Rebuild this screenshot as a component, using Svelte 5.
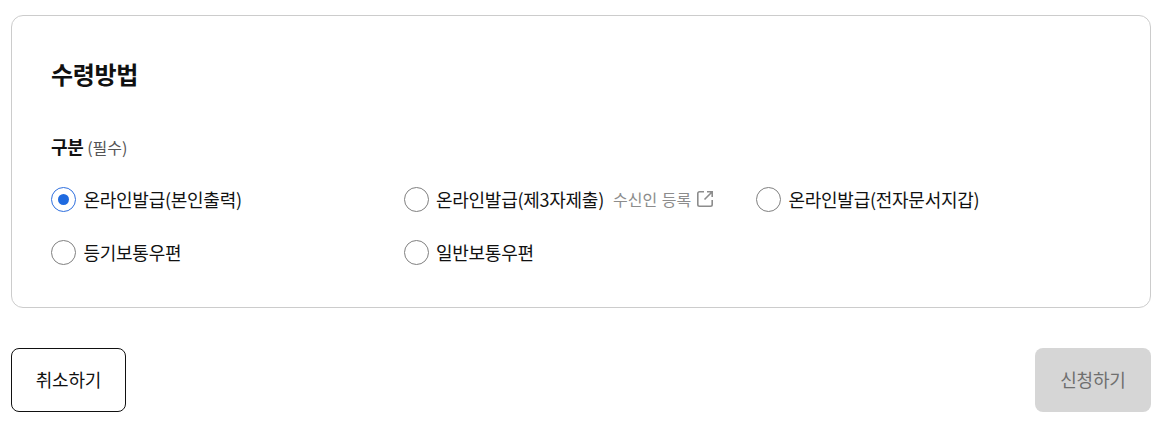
<script lang="ts">
    const options = [
        { label: "온라인발급(본인출력)", checked: true },
        { label: "온라인발급(제3자제출)", link: "수신인 등록" },
        { label: "온라인발급(전자문서지갑)" },
        { label: "등기보통우편" },
        { label: "일반보통우편" },
    ];
</script>

<main class="page">
    <section class="card">
        <h2 class="title">수령방법</h2>
        <div class="field-label"><strong>구분</strong> <span>(필수)</span></div>
        <div class="options">
            {#each options as opt}
                <div class="option">
                    <span class="radio" class:checked={opt.checked}></span>
                    <span class="label">{opt.label}</span>
                    {#if opt.link}
                        <span class="link">{opt.link}</span>
                        <svg class="ext" width="18" height="18" viewBox="0 0 18 18" fill="none" stroke="#8c8c8c" stroke-width="1.6">
                            <path d="M8 1.800H3.500A1.700 1.700 0 0 0 1.800 3.500v11a1.700 1.700 0 0 0 1.700 1.700h11a1.700 1.700 0 0 0 1.700-1.700V10" />
                            <path d="M11 1.800h5.200V7M16.200 1.800L8.500 9.500" />
                        </svg>
                    {/if}
                </div>
            {/each}
        </div>
    </section>
    <div class="actions">
        <button class="btn cancel">취소하기</button>
        <button class="btn submit" disabled>신청하기</button>
    </div>
</main>

<style>
    :global(body) {
        margin: 0;
        background: #fff;
    }

    .page {
        padding: 15px 18px 0 11px;
        font-family: "Noto Sans CJK KR", "Noto Sans", sans-serif;
        letter-spacing: -0.02em;
        color: #111;
    }

    .card {
        box-sizing: border-box;
        height: 293px;
        border: 1px solid #ccc;
        border-radius: 12px;
        padding: 40px 39px 0;
    }

    .title {
        margin: 0;
        font-size: 24px;
        line-height: 36px;
        font-weight: 700;
    }

    .field-label {
        margin-top: 42px;
        font-size: 18px;
        line-height: 24px;
    }

    .field-label strong {
        font-weight: 700;
    }

    .field-label span {
        font-size: 16px;
        letter-spacing: 0;
        color: #555;
    }

    .options {
        margin-top: 24px;
        display: grid;
        grid-template-columns: repeat(3, 352.5px);
        row-gap: 21px;
    }

    .option {
        display: flex;
        align-items: center;
        height: 32px;
        font-size: 18px;
        letter-spacing: -0.015em;
    }

    .radio {
        box-sizing: border-box;
        width: 25px;
        height: 25px;
        border: 1.5px solid #808080;
        border-radius: 50%;
        margin-right: 8px;
        display: flex;
        align-items: center;
        justify-content: center;
    }

    .radio.checked {
        border-color: #2f6fde;
    }

    .radio.checked::after {
        content: "";
        width: 11px;
        height: 11px;
        border-radius: 50%;
        background: #1f6ae0;
    }

    .label {
        margin-left: -0.5px;
    }

    .link {
        margin-left: 9px;
        font-size: 16px;
        letter-spacing: 0;
        word-spacing: 1px;
        color: #8c8c8c;
    }

    .ext {
        margin-left: 5px;
    }

    .actions {
        margin-top: 40px;
        display: flex;
        justify-content: space-between;
    }

    .btn {
        box-sizing: border-box;
        width: 115px;
        height: 64px;
        padding: 0 0 3px;
        border-radius: 8px;
        font: inherit;
        font-size: 18px;
        letter-spacing: -0.01em;
    }

    .cancel {
        background: #fff;
        border: 1px solid #111;
        color: #111;
    }

    .submit {
        width: 116px;
        background: #d6d6d6;
        border: 0;
        color: #6f6f6f;
    }
</style>
